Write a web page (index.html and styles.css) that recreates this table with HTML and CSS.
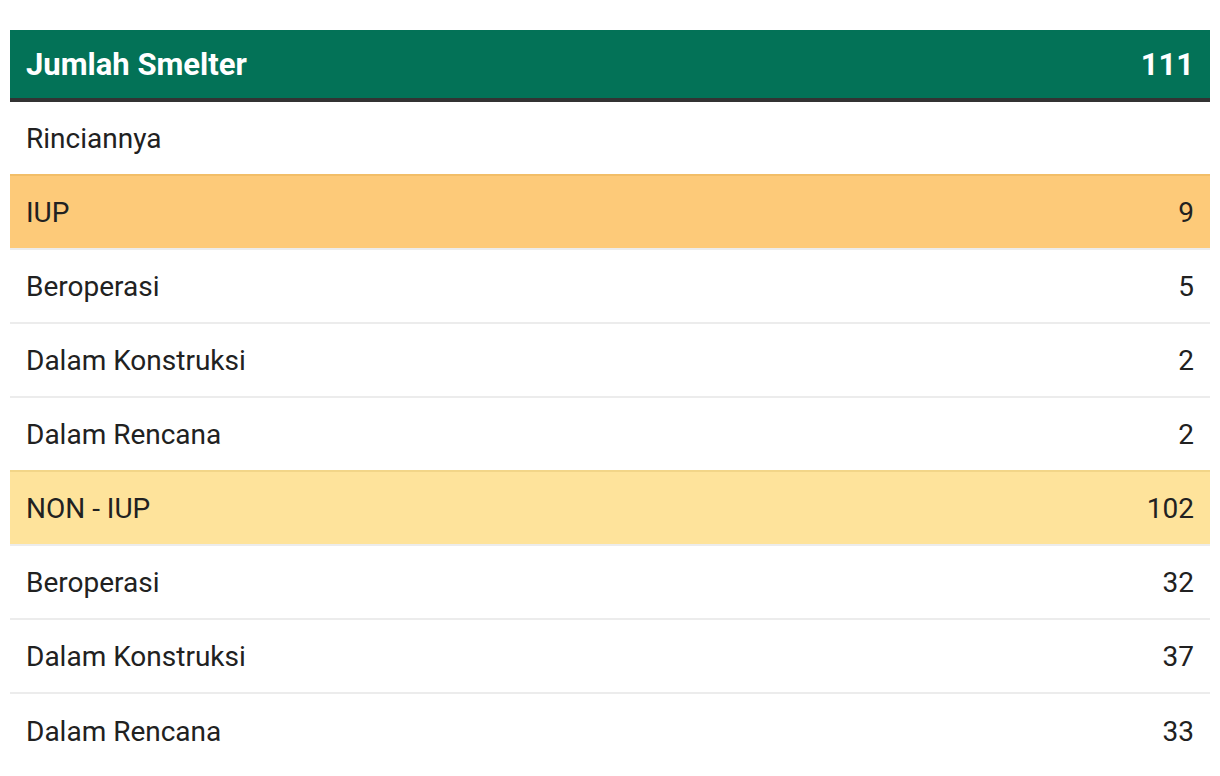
FILE: index.html
```html
<!DOCTYPE html>
<html lang="id">
<head>
<meta charset="utf-8">
<title>Jumlah Smelter</title>
<link rel="stylesheet" href="styles.css">
</head>
<body>
<div class="page">
  <table class="smelter">
    <thead>
      <tr class="head">
        <th class="label">Jumlah Smelter</th>
        <th class="num">111</th>
      </tr>
    </thead>
    <tbody>
      <tr class="first"><td class="label">Rinciannya</td><td class="num"></td></tr>
      <tr class="iup"><td class="label">IUP</td><td class="num">9</td></tr>
      <tr><td class="label">Beroperasi</td><td class="num">5</td></tr>
      <tr><td class="label">Dalam Konstruksi</td><td class="num">2</td></tr>
      <tr><td class="label">Dalam Rencana</td><td class="num">2</td></tr>
      <tr class="noniup"><td class="label">NON - IUP</td><td class="num">102</td></tr>
      <tr><td class="label">Beroperasi</td><td class="num">32</td></tr>
      <tr><td class="label">Dalam Konstruksi</td><td class="num">37</td></tr>
      <tr><td class="label">Dalam Rencana</td><td class="num">33</td></tr>
    </tbody>
  </table>
</div>
</body>
</html>
```

FILE: styles.css
```css
html, body {
  margin: 0;
  padding: 0;
  background: #ffffff;
}

body {
  font-family: Roboto, "Liberation Sans", sans-serif;
  color: #212121;
}

.page {
  padding: 30px 10px 0 10px;
}

.smelter {
  width: 100%;
  border-collapse: collapse;
  border-spacing: 0;
}

.smelter th,
.smelter td {
  padding: 1px 16px 0 16px;
  font-size: 28px;
  line-height: 71px;
  height: 72px;
  box-sizing: border-box;
}

.smelter .label {
  text-align: left;
}

.smelter .num {
  text-align: right;
}

.head th {
  background: #037257;
  color: #ffffff;
  font-weight: 700;
  font-size: 31px;
  height: 68px;
  line-height: 67px;
  border-bottom: 4px solid #333333;
}

.smelter tbody tr td {
  border-top: 2px solid #ececec;
  height: 74px;
}

.smelter tbody tr.first td {
  border-top: none;
  height: 72px;
}

.smelter tbody tr.iup td {
  background: #fdca79;
  border-top-color: #f2be68;
}

.smelter tbody tr.noniup td {
  background: #fee39b;
  border-top-color: #f2d588;
}
```
